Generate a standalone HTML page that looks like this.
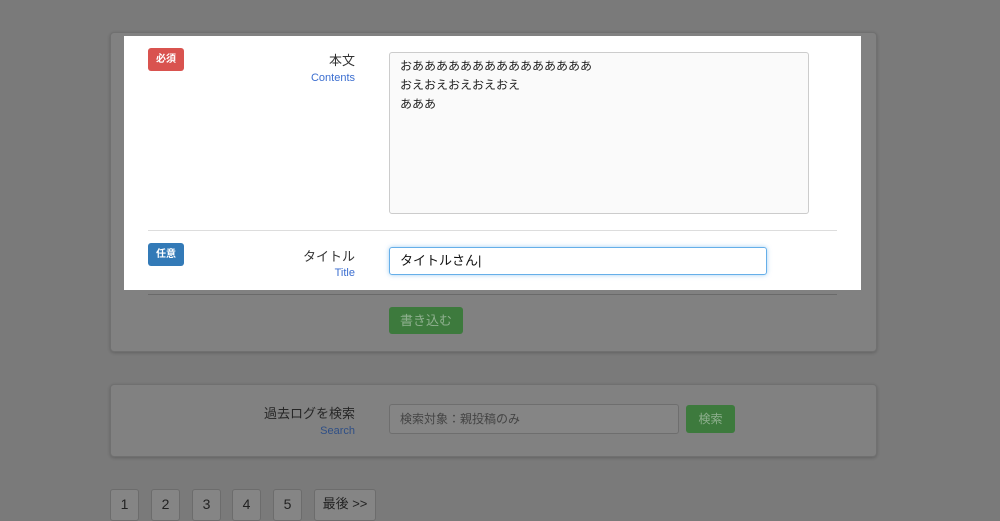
<!DOCTYPE html><html><head><meta charset="utf-8"><style>
body{margin:0;width:1000px;height:504px;overflow:hidden;background:#7a7a7a;font-family:"Liberation Sans","Noto Sans CJK JP",sans-serif;position:relative}
.a{position:absolute}
.panel{background:#818181;border:1px solid #707070;border-radius:4px;box-shadow:0 1px 3px rgba(0,0,0,.2)}
.lbl{text-align:right;width:200px;font-size:13px;color:#333}
.en{text-align:right;width:200px;font-size:11px;color:#3b6ed0}
.badge{color:#fff;font-size:10px;font-weight:bold;text-align:center;line-height:23px;border-radius:3px;width:36px;height:23px}
.pg{top:489px;height:30px;background:#858585;border:1px solid #6c6c6c;border-radius:3px;font-size:14px;color:#222;text-align:center;line-height:28px}
</style></head><body>
<div class="a panel" style="left:110px;top:32px;width:765px;height:318px"></div>
<div class="a" style="left:148px;top:294px;width:689px;height:1px;background:#6a6a6a"></div>
<div class="a" style="left:389px;top:307px;width:74px;height:27px;background:#3d7a3d;border-radius:3px;color:#8fb08f;font-size:13px;text-align:center;line-height:27px">書き込む</div>
<div class="a" style="left:124px;top:36px;width:737px;height:254px;background:#fff"></div>
<div class="a badge" style="left:148px;top:48px;background:#d9534f">必須</div>
<div class="a lbl" style="left:155px;top:50px">本文</div>
<div class="a en" style="left:155px;top:72px">Contents</div>
<div class="a" style="left:389px;top:52px;width:420px;height:162px;border:1px solid #ccc;border-radius:3px;background:#fafafa;font-size:12px;color:#222;line-height:19px;padding:4px 10px;box-sizing:border-box">おあああああああああああああああ<br>おえおえおえおえおえ<br>あああ</div>
<div class="a" style="left:148px;top:230px;width:689px;height:1px;background:#ddd"></div>
<div class="a badge" style="left:148px;top:243px;background:#337ab7">任意</div>
<div class="a lbl" style="left:155px;top:246px">タイトル</div>
<div class="a en" style="left:155px;top:267px">Title</div>
<div class="a" style="left:389px;top:247px;width:378px;height:28px;border:1px solid #66afe9;border-radius:3px;box-shadow:0 0 5px rgba(102,175,233,.6);box-sizing:border-box;font-size:13px;color:#111;line-height:26px;padding-left:10px">タイトルさん|</div>
<div class="a panel" style="left:110px;top:384px;width:765px;height:71px"></div>
<div class="a lbl" style="left:155px;top:403px;color:#262626">過去ログを検索</div>
<div class="a en" style="left:155px;top:425px;color:#2f4f86">Search</div>
<div class="a" style="left:389px;top:404px;width:290px;height:30px;border:1px solid #6e6e6e;border-radius:3px;background:#858585;box-sizing:border-box;font-size:12px;color:#444;line-height:28px;padding-left:10px">検索対象：親投稿のみ</div>
<div class="a" style="left:686px;top:405px;width:49px;height:28px;background:#3d7a3d;border-radius:3px;color:#8fb08f;font-size:12px;text-align:center;line-height:28px">検索</div>
<div class="a pg" style="left:110px;width:27px">1</div>
<div class="a pg" style="left:151px;width:27px">2</div>
<div class="a pg" style="left:192px;width:27px">3</div>
<div class="a pg" style="left:232px;width:27px">4</div>
<div class="a pg" style="left:273px;width:27px">5</div>
<div class="a pg" style="left:314px;width:60px;font-size:13px">最後 &gt;&gt;</div>
</body></html>
